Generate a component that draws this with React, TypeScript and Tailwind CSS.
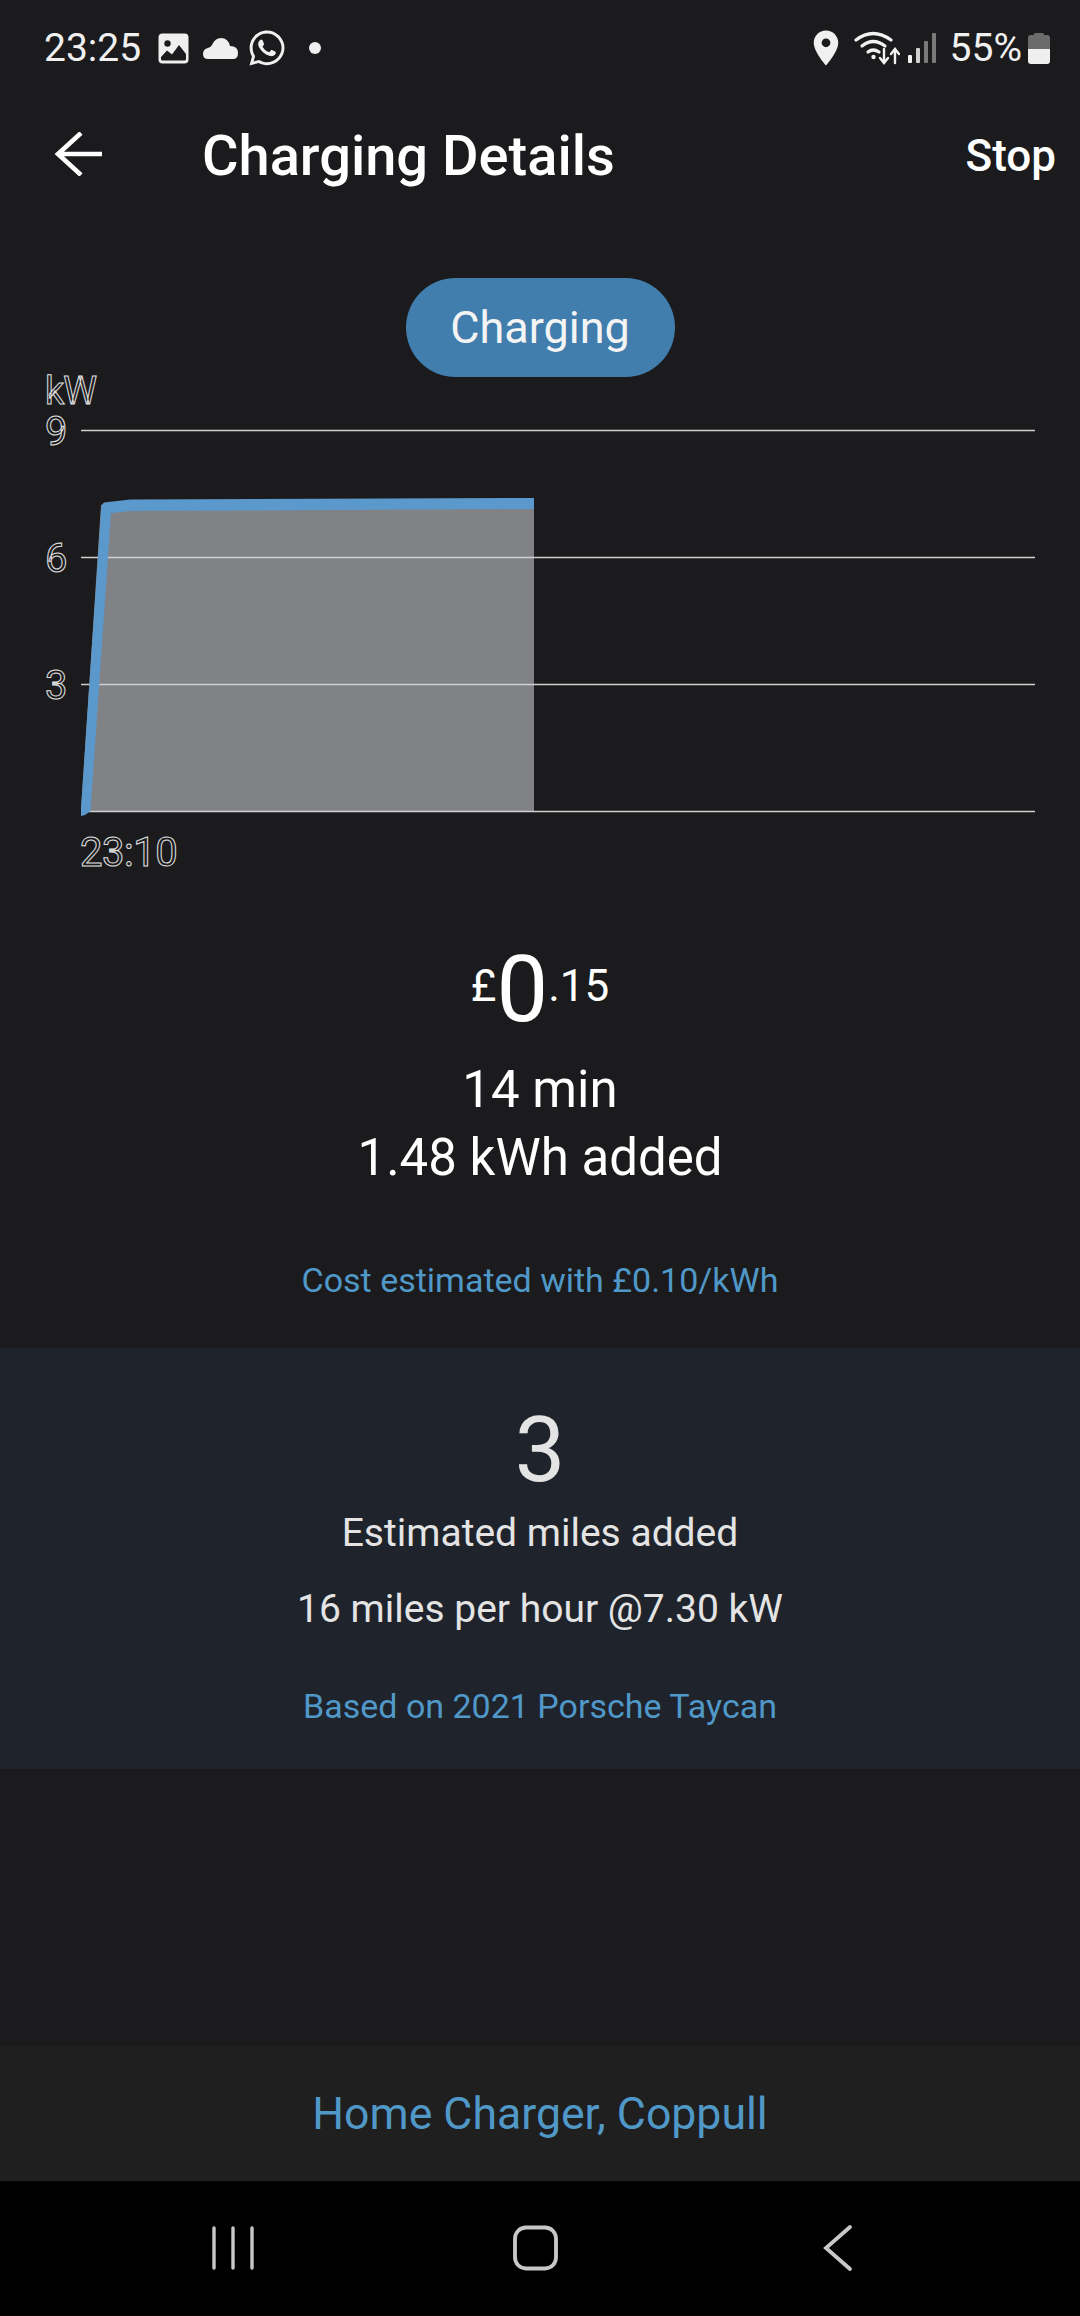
import { FaWhatsapp } from "react-icons/fa";
import { MdLocationOn } from "react-icons/md";

function PictureIcon() {
  return (
    <svg width="31" height="31" viewBox="0 0 31 31" className="ml-[17px]">
      <rect x="0.5" y="0.5" width="30" height="30" rx="4" fill="#efefef" />
      <circle cx="9.5" cy="10.5" r="3.2" fill="#1b1b1d" />
      <path d="M3 26.5 V24 L9 17.5 L14 21.5 L21 12 L28 21 V26.5 Q28 27.5 26 27.5 H5 Q3 27.5 3 26.5 Z" fill="#1b1b1d" />
    </svg>
  );
}

function CloudIcon() {
  return (
    <svg width="35" height="21" viewBox="0 0 35 21" className="ml-[14px]">
      <path d="M5 21 Q0 21 0 16 Q0 11 5 10 Q8 9 9 7 Q12 0 18 0 Q25 0 27 8 Q35 8 35 15 Q35 21 30 21 Z" fill="#efefef" />
    </svg>
  );
}

function WifiIcon() {
  return (
    <svg width="46" height="34" viewBox="0 0 46 34" fill="none" stroke="#f2f2f2" strokeLinecap="round" className="ml-[7px]">
      <path d="M2 9 Q19 -4 37 9" strokeWidth="3.2" />
      <path d="M8 15 Q19 6 31 15" strokeWidth="3.2" />
      <path d="M14 21 Q19 17 25 21" strokeWidth="3.2" />
      <circle cx="19.5" cy="26" r="2.2" fill="#f2f2f2" stroke="none" />
      <path d="M30 18 V31 M26 27 L30 32 L34 27" strokeWidth="2.4" />
      <path d="M41 32 V19 M37 23 L41 18 L45 23" strokeWidth="2.4" />
    </svg>
  );
}

function SignalIcon() {
  return (
    <svg width="28" height="30" viewBox="0 0 28 30" className="ml-[8px]">
      <rect x="0" y="22" width="4" height="8" rx="1" fill="#f2f2f2" />
      <rect x="8" y="15" width="4" height="15" rx="1" fill="#d0d0d0" />
      <rect x="16" y="8" width="4" height="22" rx="1" fill="#7a7a7a" />
      <rect x="24" y="0" width="4" height="30" rx="1" fill="#7a7a7a" />
    </svg>
  );
}

function BatteryIcon() {
  return (
    <svg width="22" height="31" viewBox="0 0 22 31" className="ml-[6px]">
      <path d="M7 0 H15 Q16 0 16 2 H19 Q22 2 22 5 V16 H0 V5 Q0 2 3 2 H6 Q6 0 7 0 Z" fill="#6b6b6b" />
      <path d="M0 16 H22 V28 Q22 31 19 31 H3 Q0 31 0 28 Z" fill="#efefef" />
    </svg>
  );
}

function Chart() {
  const grid = [430.5, 557.5, 684.5, 811.5];
  const text = { fill: "none", stroke: "#e2e2e2", strokeWidth: 1, fontFamily: "Roboto, sans-serif", fontSize: 40 };
  return (
    <svg width="1080" height="530" viewBox="0 360 1080 530" className="block">
      <path d="M81 811 L101 505 L130 502 L534 500 V811 Z" fill="#808286" />
      {grid.map((y) => (
        <line key={y} x1="81" x2="1035" y1={y} y2={y} stroke="#d0d0d0" strokeWidth="1.6" />
      ))}
      <path d="M81 816 V808 L101.5 505 L104 502.5 L130 499.5 L534 498 V509 L130 511 L111 513 L90.5 811 L85 815 Z" fill="#5b98cc" />
      <text x="45" y="404" {...text} fontSize="38" letterSpacing="-1">kW</text>
      <text x="45" y="445" {...text}>9</text>
      <text x="45" y="572" {...text}>6</text>
      <text x="45" y="699" {...text}>3</text>
      <text x="80" y="866" {...text} letterSpacing="-0.5">23:10</text>
    </svg>
  );
}

export default function App() {
  return (
    <div className="flex h-[2316px] w-[1080px] flex-col overflow-hidden bg-[#1b1b1d] font-['Roboto',sans-serif] text-white">
      <div className="flex h-[96px] shrink-0 items-center pl-[44px] pr-[30px] text-[#f0f0f0]">
        <span className="text-[39px] leading-none">23:25</span>
        <PictureIcon />
        <CloudIcon />
        <FaWhatsapp size={40} className="ml-[9px]" />
        <span className="ml-[22px] h-[12px] w-[12px] rounded-full bg-[#efefef]" />
        <span className="flex-1" />
        <MdLocationOn size={42} />
        <WifiIcon />
        <SignalIcon />
        <span className="ml-[14px] text-[39px] leading-none">55%</span>
        <BatteryIcon />
      </div>

      <div className="flex h-[120px] shrink-0 items-center pl-[54px] pr-[24px]">
        <svg width="50" height="44" viewBox="0 0 50 44" fill="none" stroke="#fff" strokeWidth="4.6" className="-mt-[4px]">
          <path d="M4 22 H48 M27 1 L4 22 L27 43" />
        </svg>
        <span className="ml-[98px] text-[56px] font-medium leading-none">Charging Details</span>
        <span className="flex-1" />
        <span className="text-[44px] font-medium leading-none">Stop</span>
      </div>

      <div className="flex shrink-0 justify-center pt-[62px]">
        <div className="flex h-[99px] w-[269px] items-center justify-center rounded-full bg-[#417eae] text-[45px] leading-none text-[#f4f4f4]">
          Charging
        </div>
      </div>

      <div className="-mt-[17px] shrink-0">
        <Chart />
      </div>

      <div className="-mt-[10px] flex shrink-0 flex-col items-center">
        <div className="mt-[72px] flex h-[80px] items-start justify-center">
          <span className="mt-[12px] text-[44px] leading-none">£</span>
          <span className="-mt-[8px] text-[92px] leading-none">0</span>
          <span className="mt-[12px] text-[44px] leading-none">.15</span>
        </div>
        <div className="mt-[24px] text-[51px] leading-[68px]">14 min</div>
        <div className="text-[51px] leading-[68px]">1.48 kWh added</div>
        <div className="mt-[68px] text-[34px] leading-[40px] text-[#5098c8]">Cost estimated with £0.10/kWh</div>
      </div>

      <div className="mt-[48px] flex h-[421px] shrink-0 flex-col items-center bg-[#1f232b] text-[#e4e4e4]">
        <div className="mt-[53px] text-[90px] leading-[100px]">3</div>
        <div className="mt-[10px] text-[39px] leading-[44px]">Estimated miles added</div>
        <div className="mt-[32px] text-[39px] leading-[44px]">16 miles per hour @7.30 kW</div>
        <div className="mt-[55px] text-[34px] leading-[40px] text-[#5098c8]">Based on 2021 Porsche Taycan</div>
      </div>

      <div className="flex-1" />

      <div className="flex h-[135px] shrink-0 items-center justify-center bg-[#1f1f20] pt-[2px] text-[44.6px] leading-none text-[#5098c8]">
        Home Charger, Coppull
      </div>

      <div className="flex h-[135px] shrink-0 items-start bg-black">
        <svg width="1080" height="135" viewBox="0 2181 1080 135" fill="none" stroke="#c8c8c8" strokeLinecap="round">
          <path d="M214 2228 V2268 M233 2228 V2268 M252 2228 V2268" strokeWidth="3.4" />
          <rect x="515" y="2227.5" width="41" height="41" rx="11" strokeWidth="3.8" />
          <path d="M850 2227 L826 2248 L850 2269" strokeWidth="3.8" />
        </svg>
      </div>
    </div>
  );
}
